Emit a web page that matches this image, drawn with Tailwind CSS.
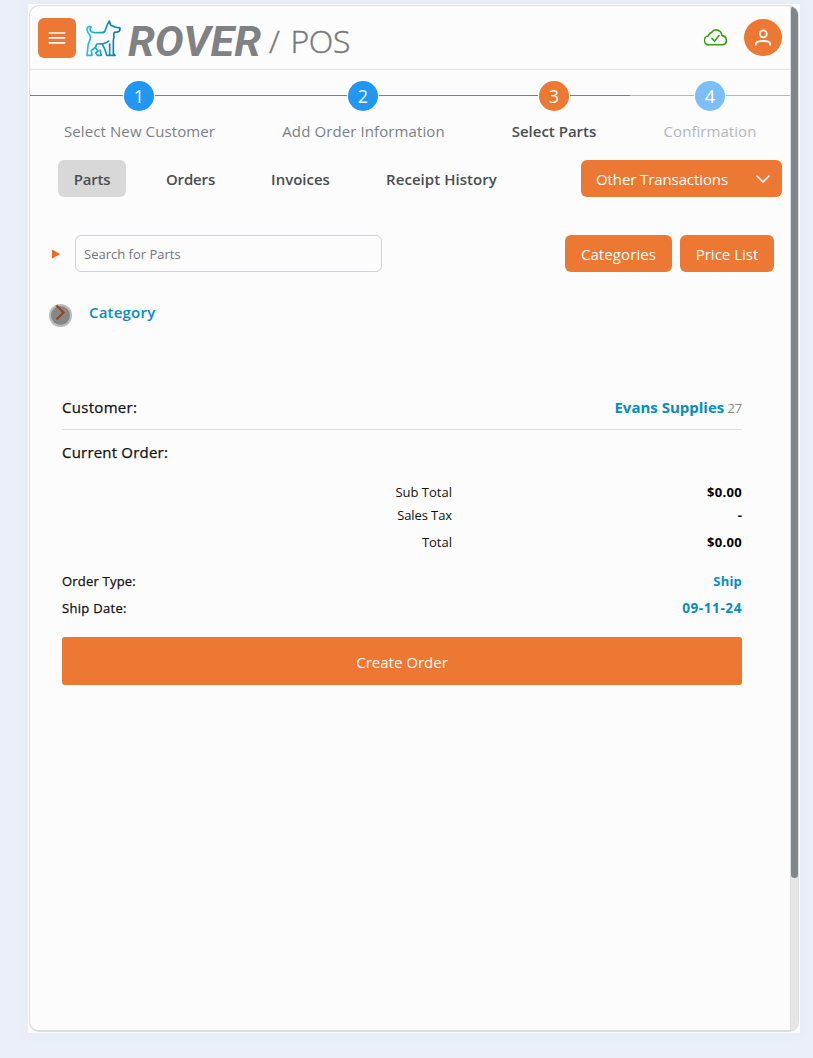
<!DOCTYPE html>
<html lang="en">
<head>
<meta charset="utf-8">
<title>Rover POS</title>
<script src="https://cdn.jsdelivr.net/npm/@tailwindcss/browser@4"></script>
</head>
<body class="h-[1058px] w-[813px] overflow-hidden bg-[#ebf0f8] pt-1 pl-7 font-['Open_Sans',sans-serif] text-base text-[#4a4d52]">
<div class="h-[1029px] w-[772px] bg-[#fcfcfc] p-px shadow-[0_0_8px_5px_#e7ecf5]">
<div class="flex h-[1027px] w-[770px] overflow-hidden rounded-[10px] border border-[#dcdddf] border-b-2">
  <main class="flex w-[760px] shrink-0 flex-col">
    <header class="flex h-16 shrink-0 items-center border-b border-[#e2e3e5] pr-2 pl-2">
      <button class="flex h-10 w-[38px] items-center justify-center rounded-md bg-[#ed7833]">
        <svg width="18" height="14" viewBox="0 0 18 14" stroke="#fff" stroke-width="1.7"><path d="M.7 2h16.6M.7 6.9h16.6M.7 11.8h16.6"/></svg>
      </button>
      <svg class="ml-[9px]" width="37" height="38" viewBox="195 57 111 114" fill="none" stroke="url(#dog)" stroke-width="5" stroke-linejoin="round" stroke-linecap="round">
        <defs><linearGradient id="dog" x1="195" x2="305" y1="0" y2="0" gradientUnits="userSpaceOnUse"><stop stop-color="#20c5e8"/><stop offset="1" stop-color="#0870a4"/></linearGradient></defs>
        <path d="M213 81c-5-4-12 0-12 7 0 9 5 13 9 18 3 6 1 11-1 16-2 6-5 9-5 16l-3 28h15l-2-14 13-11 3-9M213 81c-4 4-4 9 0 13 3 4 6 4 11 4h21c6 0 9-2 11-7l5-15 7-13 4 13c6 0 8 2 12 5l16 3-1 8c-4 5-10 5-16 5l-2 4c2 8 1 14-1 20v40l5 5h-25l-4-14-8-18M226 143l8 10-7 6 5 7h12l-4-16M230 132l20-1c7-1 12-4 16-8M269 132v34"/>
      </svg>
      <svg class="ml-1.5 overflow-visible" width="138" height="56" viewBox="0 0 138 56"><text x="0" y="46" font-family="Roboto" font-size="42" font-weight="700" font-style="italic" fill="#7f8184" textLength="133" lengthAdjust="spacingAndGlyphs">ROVER</text></svg>
      <span class="mt-1.5 ml-[3px] text-[32px] font-light tracking-[-0.4px] text-[#77797d] [-webkit-text-stroke:0.4px_#77797d]">/<span class="ml-[11px]">POS</span></span>
      <svg class="ml-auto" width="24" height="17" viewBox="0 0 24 17" fill="none" stroke="#3c9a18" stroke-width="1.6" stroke-linecap="round" stroke-linejoin="round"><path d="M5.2 15.8A4.4 4.4 0 0 1 4.3 7 4.6 4.6 0 0 1 7.6 3.4a5.6 5.6 0 0 1 10.2 3.2A4.7 4.7 0 0 1 19 15.8ZM8 9.4l2.6 2.8 4.4-5.6"/></svg>
      <button class="ml-4 flex h-[37px] w-[38px] items-center justify-center rounded-full bg-[#ed7833]">
        <svg width="18" height="18" viewBox="0 0 18 18" fill="none" stroke="#fff" stroke-width="1.8"><circle cx="9.3" cy="4.8" r="3.5"/><path d="M1.8 16.5v-1.2c0-2 2-3.3 7.2-3.3s7.2 1.3 7.2 3.3v1.2"/></svg>
      </button>
    </header>

    <ol class="flex h-[85px] shrink-0 text-center text-[#7b8087]">
      <li class="w-[218px] pt-2.5">
        <div class="flex h-8 items-center gap-px text-lg text-white"><i class="mb-0.5 h-px flex-1 bg-[#7c8084]"></i><b class="size-[30px] rounded-full bg-[#2196f3] leading-[31px] font-normal">1</b><i class="mb-0.5 h-px flex-1 bg-[#7c8084]"></i></div>
        <div class="mt-2 pl-px text-[15px] tracking-[0.1px] whitespace-nowrap">Select New Customer</div>
      </li>
      <li class="w-[230px] pt-2.5">
        <div class="flex h-8 items-center gap-px text-lg text-white"><i class="mb-0.5 h-px flex-1 bg-[#7c8084]"></i><b class="size-[30px] rounded-full bg-[#2196f3] leading-[31px] font-normal">2</b><i class="mb-0.5 h-px flex-1 bg-[#7c8084]"></i></div>
        <div class="mt-2 pl-px text-[15px] tracking-[0.1px] whitespace-nowrap">Add Order Information</div>
      </li>
      <li class="w-[152px] pt-2.5">
        <div class="flex h-8 items-center gap-px text-lg text-white"><i class="mb-0.5 h-px flex-1 bg-[#7c8084]"></i><b class="size-[30px] rounded-full bg-[#ed7833] leading-[31px] font-normal">3</b><i class="mb-0.5 h-px flex-1 bg-[#7c8084]"></i></div>
        <div class="mt-2 text-[15px] font-semibold text-[#4a4d52] whitespace-nowrap">Select Parts</div>
      </li>
      <li class="w-[160px] pt-2.5">
        <div class="flex h-8 items-center gap-px text-lg text-white"><i class="mb-0.5 h-px flex-1 bg-[#b5b7b9]"></i><b class="size-[30px] rounded-full bg-[#7abff8] leading-[31px] font-normal">4</b><i class="mb-0.5 h-px flex-1 bg-[#b5b7b9]"></i></div>
        <div class="mt-2 text-[15px] tracking-[0.05px] text-[#b5b8bc] whitespace-nowrap">Confirmation</div>
      </li>
    </ol>

    <nav class="mt-[5px] flex h-[37px] shrink-0 gap-6 pr-2 pl-7 text-[15px] leading-[38px] font-semibold">
      <a class="w-[68px] rounded-md bg-[#d8d8d8] text-center tracking-[-0.2px]">Parts</a>
      <a class="w-[81px] text-center tracking-[-0.15px]">Orders</a>
      <a class="w-[91px] text-center">Invoices</a>
      <a class="w-[143px] text-center tracking-[0.05px] whitespace-nowrap">Receipt History</a>
      <button class="ml-auto flex w-[201px] items-center justify-between rounded-md bg-[#ed7833] pr-3 pl-[15px] font-normal tracking-[-0.1px] text-white">Other Transactions
        <svg width="14" height="8" viewBox="0 0 14 8" fill="none" stroke="#fff" stroke-width="1.6" stroke-linecap="round" stroke-linejoin="round"><path d="m1 1 6 6 6-6"/></svg>
      </button>
    </nav>

    <section class="mt-[38px] flex h-[37px] shrink-0 items-center pr-4 pl-[22px]">
      <svg width="8" height="10" viewBox="0 0 8 10"><path d="M0 .5v9L8 5z" fill="#f9671e"/></svg>
      <div class="ml-[15px] h-[37px] w-[307px] rounded-md border border-[#ced1d6] pl-2 text-[13px] leading-[37px] text-[#71767c]">Search for Parts</div>
      <button class="ml-auto h-[37px] w-[107px] rounded-md bg-[#ed7833] text-[15px] leading-[38px] tracking-[0.1px] text-white">Categories</button>
      <button class="ml-2 h-[37px] w-[94px] rounded-md bg-[#ed7833] text-[15px] leading-[38px] text-white">Price List</button>
    </section>

    <section class="mt-7 flex h-[30px] shrink-0 pl-[19px]">
      <svg class="mt-1" width="23" height="23" viewBox="0 0 23 23"><circle cx="11.5" cy="11.5" r="11.5" fill="#bcbcbc"/><circle cx="11.5" cy="11.5" r="9.5" fill="#878787"/><path d="m7.4 1.5 7.2 7-7.2 7" fill="none" stroke="#96441a" stroke-width="2"/></svg>
      <a class="ml-[17px] text-[15px] leading-[24px] font-semibold tracking-[0.2px] text-[#078cc0]">Category</a>
    </section>

    <section class="mt-[62px] flex flex-col px-8 pr-12 text-[13px] text-[#111]">
      <div class="flex h-[38px] items-start justify-between border-b border-[#dedede] text-[15px] leading-[30px]"><span class="tracking-[0.3px] [-webkit-text-stroke:0.25px_#111]">Customer:</span><span class="font-bold text-[#078cc0]">Evans Supplies <span class="-ml-px text-[13.5px] font-normal tracking-[-0.3px] text-[#888]">27</span></span></div>
      <div class="mt-[7px] h-8 text-[15px] leading-[30px] tracking-[0.2px] [-webkit-text-stroke:0.25px_#111]">Current Order:</div>
      <div class="mt-3 grid grid-cols-[390px_1fr] grid-rows-[23px_24px_29px] items-center text-right [&>b]:text-black"><span>Sub Total</span><b class="tracking-[0.3px]">$0.00</b><span class="tracking-[-0.1px]">Sales Tax</span><b>-</b><span>Total</span><b class="tracking-[0.3px]">$0.00</b></div>
      <div class="mt-[11px] flex h-[27px] items-center justify-between"><span class="tracking-[0.2px] [-webkit-text-stroke:0.25px_#111]">Order Type:</span><b class="tracking-[0.2px] text-[#078cc0]">Ship</b></div>
      <div class="flex h-[27px] items-center justify-between"><span class="tracking-[0.3px] [-webkit-text-stroke:0.25px_#111]">Ship Date:</span><b class="text-[13.5px] tracking-[0.6px] text-[#078cc0]">09-11-24</b></div>
      <button class="mt-[15px] h-12 rounded-[3px] bg-[#ed7833] pt-0.5 text-[15px] text-white">Create Order</button>
    </section>
  </main>
  <aside class="w-2 shrink-0 border-l border-[#dcdddf] bg-[#e6e6e6]"><div class="h-[872px] w-[7px] rounded-full bg-[#81868d]"></div></aside>
</div>
</div>
</body>
</html>
